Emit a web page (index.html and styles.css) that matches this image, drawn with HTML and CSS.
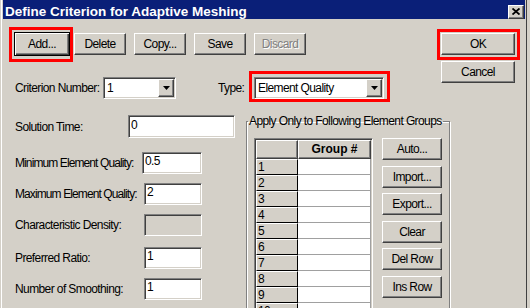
FILE: index.html
```html
<!DOCTYPE html>
<html lang="en">
<head>
  <meta charset="UTF-8">
  <meta name="viewport" content="width=device-width, initial-scale=1.0">
  <title>Define Criterion for Adaptive Meshing</title>
  <link rel="stylesheet" href="styles.css">
</head>
<body>
  <div class="window">
    <div class="titlebar">
      <span class="title">Define Criterion for Adaptive Meshing</span>
      <span class="close-btn">
        <svg width="8" height="7" viewBox="0 0 8 7"><path d="M0.5 0.5L7.5 6.5M7.5 0.5L0.5 6.5" stroke="#000" stroke-width="1.8"/></svg>
      </span>
    </div>

    <div class="client">
      <div class="header">
        <div class="header-main">
          <div class="toolbar">
            <button class="btn btn-default">Add...</button>
            <button class="btn">Delete</button>
            <button class="btn">Copy...</button>
            <button class="btn">Save</button>
            <button class="btn" disabled>Discard</button>
          </div>
          <div class="criteria">
            <span class="label label-criterion">Criterion Number:</span>
            <div class="combo combo-number">
              <span class="combo-text">1</span>
              <span class="combo-btn"><svg width="7" height="4" viewBox="0 0 7 4"><path d="M0 0h7L3.5 4z" fill="#000"/></svg></span>
            </div>
            <span class="label label-type">Type:</span>
            <div class="combo combo-type">
              <span class="combo-text">Element Quality</span>
              <span class="combo-btn"><svg width="7" height="4" viewBox="0 0 7 4"><path d="M0 0h7L3.5 4z" fill="#000"/></svg></span>
            </div>
          </div>
        </div>
        <div class="actions">
          <button class="btn btn-action">OK</button>
          <button class="btn btn-action">Cancel</button>
        </div>
      </div>

      <div class="body">
        <div class="form">
          <div class="field field-time">
            <label>Solution Time:</label>
            <input class="edit" type="text" value="0">
          </div>
          <div class="field field-min field-long">
            <label>Minimum Element Quality:</label>
            <input class="edit" type="text" value="0.5">
          </div>
          <div class="field field-long">
            <label>Maximum Element Quality:</label>
            <input class="edit" type="text" value="2">
          </div>
          <div class="field">
            <label>Characteristic Density:</label>
            <input class="edit" type="text" value="" disabled>
          </div>
          <div class="field field-ratio">
            <label>Preferred Ratio:</label>
            <input class="edit" type="text" value="1">
          </div>
          <div class="field">
            <label>Number of Smoothing:</label>
            <input class="edit" type="text" value="1">
          </div>
        </div>

        <fieldset class="groupbox">
          <legend>Apply Only to Following Element Groups</legend>
          <div class="group-content">
            <div class="grid">
              <div class="cell cell-head"></div>
              <div class="cell cell-head cell-title">Group #</div>
              <div class="cell cell-row">1</div><div class="cell cell-data"></div>
              <div class="cell cell-row">2</div><div class="cell cell-data"></div>
              <div class="cell cell-row">3</div><div class="cell cell-data"></div>
              <div class="cell cell-row">4</div><div class="cell cell-data"></div>
              <div class="cell cell-row">5</div><div class="cell cell-data"></div>
              <div class="cell cell-row">6</div><div class="cell cell-data"></div>
              <div class="cell cell-row">7</div><div class="cell cell-data"></div>
              <div class="cell cell-row">8</div><div class="cell cell-data"></div>
              <div class="cell cell-row">9</div><div class="cell cell-data"></div>
              <div class="cell cell-row">10</div><div class="cell cell-data"></div>
            </div>
            <div class="side-buttons">
              <button class="btn btn-side">Auto...</button>
              <button class="btn btn-side">Import...</button>
              <button class="btn btn-side">Export...</button>
              <button class="btn btn-side">Clear</button>
              <button class="btn btn-side">Del Row</button>
              <button class="btn btn-side">Ins Row</button>
            </div>
          </div>
        </fieldset>
      </div>
    </div>

    <!-- red annotation frames -->
    <span class="mark mark-add"></span>
    <span class="mark mark-type"></span>
    <span class="mark mark-ok"></span>
  </div>
</body>
</html>
```

FILE: styles.css
```css
* {
  box-sizing: border-box;
}

body {
  margin: 0;
  font-family: "Liberation Sans", Arial, sans-serif;
  font-size: 12px;
  letter-spacing: -0.6px;
  color: #000;
  background: #d4d0c8;
}

.window {
  position: relative;
  width: 530px;
  height: 308px;
  overflow: hidden;
  padding: 0 5px 0 3px;
  background: #d4d0c8;
  box-shadow: inset 1px 0 #d4d0c8, inset 2px 0 #fff, inset -3px 0 #d4d0c8, inset -4px 0 #404040;
}

.titlebar {
  height: 19px;
  padding: 4px 1px 0 2px;
  display: flex;
  align-items: center;
  justify-content: space-between;
  background: #0a1f78;
}

.title {
  font-weight: bold;
  font-size: 13.5px;
  letter-spacing: 0;
  color: #fff;
  white-space: nowrap;
}

.close-btn {
  width: 16px;
  height: 14px;
  display: flex;
  align-items: center;
  justify-content: center;
  background: #d4d0c8;
  border: 1px solid;
  border-color: #fff #404040 #404040 #fff;
  box-shadow: inset -1px -1px #808080;
}

.client {
  padding-top: 13px;
}

label,
.label {
  white-space: nowrap;
}

/* buttons */

.btn {
  font: inherit;
  letter-spacing: inherit;
  color: #000;
  background: #d4d0c8;
  width: 52px;
  height: 22px;
  padding: 0;
  border: 1px solid;
  border-color: #fff #404040 #404040 #fff;
  box-shadow: inset -1px -1px #808080;
  white-space: nowrap;
}

.btn:disabled {
  color: #808080;
  text-shadow: 1px 1px #fff;
}

.btn-default {
  width: 56px;
  height: 24px;
  margin-right: -4px;
  border-color: #000;
  box-shadow: inset 1px 1px #fff, inset -1px -1px #404040, inset -2px -2px #808080;
}

.btn-action {
  width: 74px;
}

.btn-side {
  width: 60px;
}

/* header */

.header {
  display: flex;
  justify-content: space-between;
  align-items: flex-start;
}

.header-main {
  margin-left: 11px;
}

.toolbar {
  display: flex;
  align-items: center;
  gap: 8px;
}

.actions {
  margin: 1px 10px 0 0;
  display: flex;
  flex-direction: column;
  gap: 6px;
}

.criteria {
  margin-top: 21px;
  display: flex;
  align-items: center;
}

.label-criterion {
  margin-left: 1px;
  width: 88px;
}

.label-type {
  margin-left: 42px;
  width: 36px;
}

.combo {
  display: flex;
  height: 22px;
  padding: 1px;
  background: #fff;
  border: 1px solid;
  border-color: #808080 #fff #fff #808080;
  box-shadow: inset 1px 1px #404040, inset -1px -1px #d4d0c8;
}

.combo-number {
  width: 73px;
}

.combo-type {
  width: 130px;
}

.combo-text {
  flex: 1;
  padding-left: 2px;
  line-height: 18px;
}

.combo-btn {
  width: 16px;
  height: 18px;
  display: flex;
  align-items: center;
  justify-content: center;
  background: #d4d0c8;
  border: 1px solid;
  border-color: #fff #404040 #404040 #fff;
  box-shadow: inset -1px -1px #808080;
}

/* form */

.body {
  margin-top: 16px;
  display: flex;
  align-items: flex-start;
}

.form {
  margin-left: 12px;
  width: 220px;
}

.field {
  display: grid;
  grid-template-columns: 129px 58px;
  align-items: center;
  height: 22px;
  margin-top: 9px;
}

.field-long label {
  letter-spacing: -0.9px;
}

.field-time {
  grid-template-columns: 113px 107px;
  height: 23px;
  margin-top: 0;
}

.field-min {
  grid-template-columns: 127px 60px;
  margin-top: 14px;
}

.field-ratio {
  margin-top: 11px;
}

.edit {
  font: inherit;
  letter-spacing: inherit;
  color: #000;
  height: 100%;
  width: 100%;
  padding: 0 2px 4px;
  background: #fff;
  border: 1px solid;
  border-color: #808080 #fff #fff #808080;
  box-shadow: inset 1px 1px #404040, inset -1px -1px #d4d0c8;
  outline: none;
}

.edit:disabled {
  background: #d4d0c8;
}

/* group box */

.groupbox {
  margin: 0 0 0 11px;
  width: 204px;
  height: 230px;
  padding: 0 2px 0 1px;
  border: 1px solid #808080;
  box-shadow: inset 1px 1px #fff, 1px 1px #fff;
  min-width: 0;
}

.groupbox legend {
  padding: 0 1px;
  line-height: 12px;
  white-space: nowrap;
}

.group-content {
  display: flex;
  align-items: flex-start;
  gap: 9px;
  padding: 11px 4px 0 6px;
}

.grid {
  width: 119px;
  display: grid;
  grid-template-columns: 42px 73px;
  grid-template-rows: 19px;
  grid-auto-rows: 16px;
  border: 1px solid;
  border-color: #808080 #fff #fff #808080;
  box-shadow: inset 1px 1px #404040;
  padding: 1px 0 0 1px;
}

.cell {
  line-height: 14px;
}

.cell-head,
.cell-row {
  background: #d4d0c8;
  border: 1px solid;
  border-color: #fff #404040 #404040 #fff;
}

.cell-head {
  box-shadow: inset -1px -1px #808080;
}

.cell-title {
  font-weight: bold;
  letter-spacing: 0;
  text-align: center;
  line-height: 17px;
}

.cell-row {
  border-color: #fff #000 #000 #fff;
  padding-left: 1px;
}

.cell-data {
  background: #fff;
  border-right: 1px solid #a0a0a0;
  border-bottom: 1px solid #a0a0a0;
}

.side-buttons {
  display: flex;
  flex-direction: column;
  gap: 5.6px;
}

/* annotation frames */

.mark {
  position: absolute;
  border: 3px solid #f00;
}

.mark-add {
  left: 9px;
  top: 27px;
  width: 64px;
  height: 35px;
}

.mark-type {
  left: 249px;
  top: 71px;
  width: 141px;
  height: 31px;
}

.mark-ok {
  left: 437px;
  top: 29px;
  width: 83px;
  height: 31px;
}
```
